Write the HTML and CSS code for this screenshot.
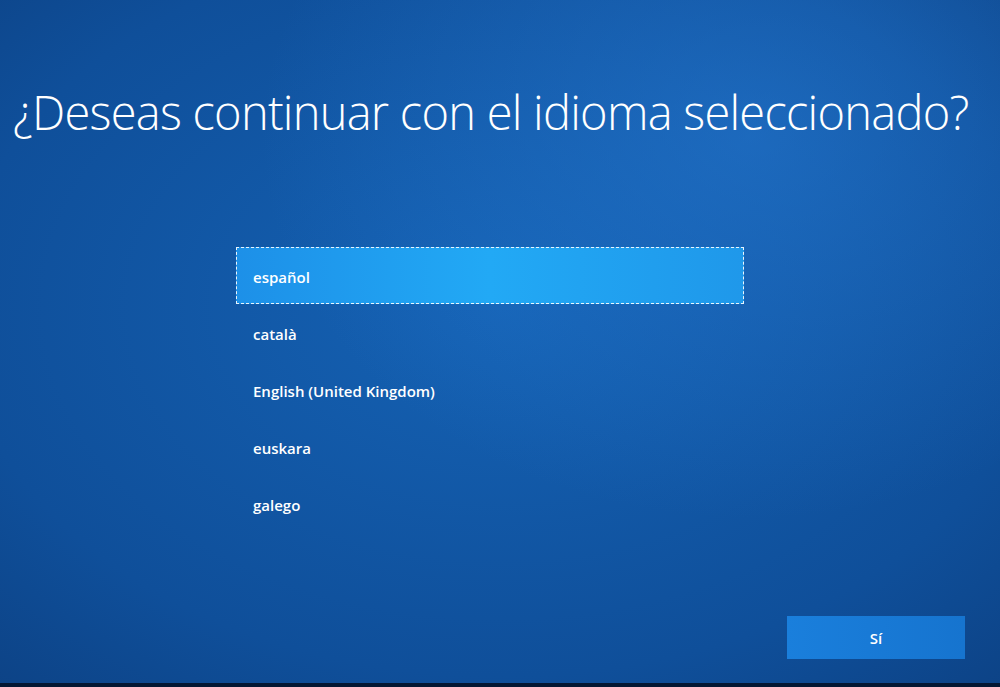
FILE: index.html
```html
<!DOCTYPE html>
<html lang="es">
<head>
  <meta charset="UTF-8" />
  <meta name="viewport" content="width=device-width, initial-scale=1.0"/>
  <title>Idioma</title>
  <link rel="stylesheet" href="styles.css">
</head>
<body>

  <div class="oobe">
    <h1 class="titulo">¿Deseas continuar con el idioma seleccionado?</h1>

    <ul class="idiomas">
      <li class="idioma seleccionado">español</li>
      <li class="idioma">català</li>
      <li class="idioma">English (United Kingdom)</li>
      <li class="idioma">euskara</li>
      <li class="idioma">galego</li>
    </ul>

    <div class="acciones">
      <button class="boton">Sí</button>
    </div>
  </div>

</body>
</html>
```

FILE: styles.css
```css
html, body {
  margin: 0;
  height: 100%;
}

body {
  font-family: "Open Sans", "Noto Sans", sans-serif;
  color: white;
  background: #041733;
}

.oobe {
  height: 683px;
  box-sizing: border-box;
  display: flex;
  flex-direction: column;
  background:
    radial-gradient(ellipse 70% 80% at 75% 20%, rgba(40, 125, 215, 0.5), rgba(40, 125, 215, 0) 70%),
    radial-gradient(ellipse 90% 90% at 50% 45%, #1562b4, #0f4f9a 60%, #0b3a78 100%);
}

.titulo {
  margin: 82px 0 0 13px;
  font-size: 47px;
  font-weight: 300;
  line-height: 60px;
  letter-spacing: -0.75px;
  white-space: nowrap;
}

.idiomas {
  list-style: none;
  margin: 105px 0 0 236px;
  padding: 0;
  width: 508px;
}

.idioma {
  height: 57px;
  line-height: 60px;
  padding-left: 17px;
  box-sizing: border-box;
  font-size: 15px;
  font-weight: 600;
}

.seleccionado {
  background: linear-gradient(90deg, #1d90e8, #22a9f5 50%, #1f98ea);
  outline: 1px dashed rgba(255, 255, 255, 0.9);
  outline-offset: -1px;
}

.acciones {
  margin-top: auto;
  display: flex;
  justify-content: flex-end;
  padding: 0 35px 24px 0;
}

.boton {
  width: 178px;
  height: 43px;
  border: none;
  background: linear-gradient(90deg, #1a7fdc, #1674cf);
  color: white;
  font-family: inherit;
  font-size: 15px;
  font-weight: 600;
}
```
